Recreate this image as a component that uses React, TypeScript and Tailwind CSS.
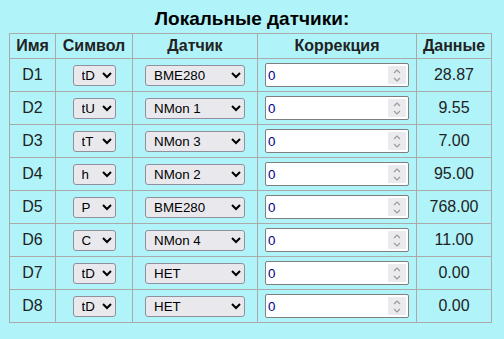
import React from "react";

type Row = { id: string; sym: string; sensor: string; corr: string; data: string };

const rows: Row[] = [
  { id: "D1", sym: "tD", sensor: "BME280", corr: "0", data: "28.87" },
  { id: "D2", sym: "tU", sensor: "NMon 1", corr: "0", data: "9.55" },
  { id: "D3", sym: "tT", sensor: "NMon 3", corr: "0", data: "7.00" },
  { id: "D4", sym: "h", sensor: "NMon 2", corr: "0", data: "95.00" },
  { id: "D5", sym: "P", sensor: "BME280", corr: "0", data: "768.00" },
  { id: "D6", sym: "C", sensor: "NMon 4", corr: "0", data: "11.00" },
  { id: "D7", sym: "tD", sensor: "НЕТ", corr: "0", data: "0.00" },
  { id: "D8", sym: "tD", sensor: "НЕТ", corr: "0", data: "0.00" },
];

const symbols = ["tD", "tU", "tT", "h", "P", "C"];
const sensors = ["НЕТ", "BME280", "NMon 1", "NMon 2", "NMon 3", "NMon 4"];

const th = "border border-[#aaaaaa] font-bold text-[16px] text-[#222] h-[25px] p-0";
const td = "border border-[#aaaaaa] text-[16px] text-[#222] h-[33px] p-0 text-center";
const sel =
  "h-[21px] rounded-[3px] border border-[#8f8f9d] bg-[#e9e9ed] text-[13.33px] text-black font-['Liberation_Sans',Arial,sans-serif] pl-[4px]";

// spinner drawn by hand: headless chrome hides the native one until hover
const Spinner = () => (
  <div className="absolute right-[3px] top-[3px] w-[18px] h-[18px] bg-[#ebebef] flex flex-col items-center justify-center gap-[3px] pointer-events-none">
    <svg width="8" height="5" viewBox="0 0 8 5">
      <path d="M1 4 L4 1 L7 4" fill="none" stroke="#9a9a9a" strokeWidth="1.2" />
    </svg>
    <svg width="8" height="5" viewBox="0 0 8 5">
      <path d="M1 1 L4 4 L7 1" fill="none" stroke="#9a9a9a" strokeWidth="1.2" />
    </svg>
  </div>
);

export default function App() {
  return (
    <div className="min-h-[339px] bg-[#b0f4fa] font-['Liberation_Sans',Arial,sans-serif] pt-[7px]">
      <h3 className="text-center font-bold text-[19px] leading-[24px] text-black">
        Локальные датчики:
      </h3>
      <table className="ml-[9px] mt-[2px] w-[482px] border-collapse table-fixed">
        <colgroup>
          <col className="w-[46px]" />
          <col className="w-[77px]" />
          <col className="w-[125px]" />
          <col className="w-[159px]" />
          <col className="w-[75px]" />
        </colgroup>
        <thead>
          <tr>
            <th className={th}>Имя</th>
            <th className={th}>Символ</th>
            <th className={th}>Датчик</th>
            <th className={th}>Коррекция</th>
            <th className={th}>Данные</th>
          </tr>
        </thead>
        <tbody>
          {rows.map((r) => (
            <tr key={r.id}>
              <td className={td}>{r.id}</td>
              <td className={td}>
                <select defaultValue={r.sym} className={`${sel} w-[43px] align-middle`}>
                  {symbols.map((s) => (
                    <option key={s}>{s}</option>
                  ))}
                </select>
              </td>
              <td className={td}>
                <select defaultValue={r.sensor} className={`${sel} w-[100px] align-middle`}>
                  {sensors.map((s) => (
                    <option key={s}>{s}</option>
                  ))}
                </select>
              </td>
              <td className={td}>
                <div className="relative inline-block align-middle">
                  <input
                    type="number"
                    defaultValue={r.corr}
                    className="block w-[144px] h-[24px] rounded-[2px] border border-[#7f7f7f] bg-white text-[13.33px] text-[#00008b] pl-[2px] font-['Liberation_Sans',Arial,sans-serif] [appearance:textfield] [&::-webkit-inner-spin-button]:appearance-none"
                  />
                  <Spinner />
                </div>
              </td>
              <td className={td}>{r.data}</td>
            </tr>
          ))}
        </tbody>
      </table>
    </div>
  );
}
